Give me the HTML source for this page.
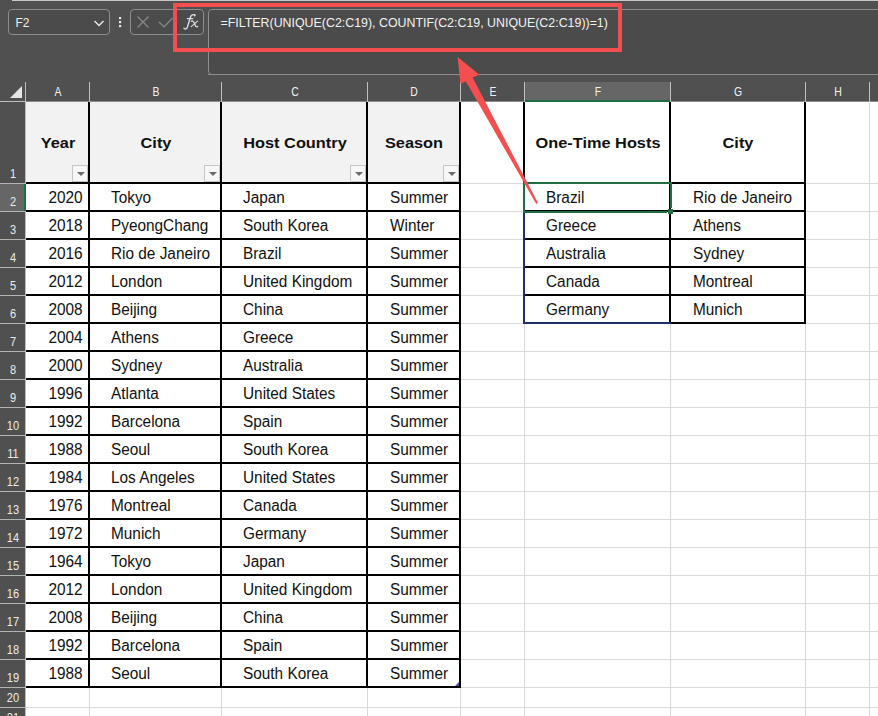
<!DOCTYPE html>
<html><head><meta charset="utf-8"><style>
html,body{margin:0;padding:0;}
body{width:878px;height:716px;overflow:hidden;position:relative;background:#505050;font-family:"Liberation Sans", sans-serif;}
</style></head><body>
<div style="position:absolute;left:26px;top:102px;width:852px;height:614px;background:#ffffff;"></div>
<div style="position:absolute;left:89px;top:102px;width:1px;height:614px;background:#dadada;"></div>
<div style="position:absolute;left:221px;top:102px;width:1px;height:614px;background:#dadada;"></div>
<div style="position:absolute;left:367px;top:102px;width:1px;height:614px;background:#dadada;"></div>
<div style="position:absolute;left:460px;top:102px;width:1px;height:614px;background:#dadada;"></div>
<div style="position:absolute;left:524px;top:102px;width:1px;height:614px;background:#dadada;"></div>
<div style="position:absolute;left:670px;top:102px;width:1px;height:614px;background:#dadada;"></div>
<div style="position:absolute;left:805px;top:102px;width:1px;height:614px;background:#dadada;"></div>
<div style="position:absolute;left:869px;top:102px;width:1px;height:614px;background:#dadada;"></div>
<div style="position:absolute;left:26px;top:183px;width:852px;height:1px;background:#dadada;"></div>
<div style="position:absolute;left:26px;top:211px;width:852px;height:1px;background:#dadada;"></div>
<div style="position:absolute;left:26px;top:239px;width:852px;height:1px;background:#dadada;"></div>
<div style="position:absolute;left:26px;top:267px;width:852px;height:1px;background:#dadada;"></div>
<div style="position:absolute;left:26px;top:295px;width:852px;height:1px;background:#dadada;"></div>
<div style="position:absolute;left:26px;top:323px;width:852px;height:1px;background:#dadada;"></div>
<div style="position:absolute;left:26px;top:351px;width:852px;height:1px;background:#dadada;"></div>
<div style="position:absolute;left:26px;top:379px;width:852px;height:1px;background:#dadada;"></div>
<div style="position:absolute;left:26px;top:407px;width:852px;height:1px;background:#dadada;"></div>
<div style="position:absolute;left:26px;top:435px;width:852px;height:1px;background:#dadada;"></div>
<div style="position:absolute;left:26px;top:463px;width:852px;height:1px;background:#dadada;"></div>
<div style="position:absolute;left:26px;top:491px;width:852px;height:1px;background:#dadada;"></div>
<div style="position:absolute;left:26px;top:519px;width:852px;height:1px;background:#dadada;"></div>
<div style="position:absolute;left:26px;top:547px;width:852px;height:1px;background:#dadada;"></div>
<div style="position:absolute;left:26px;top:575px;width:852px;height:1px;background:#dadada;"></div>
<div style="position:absolute;left:26px;top:603px;width:852px;height:1px;background:#dadada;"></div>
<div style="position:absolute;left:26px;top:631px;width:852px;height:1px;background:#dadada;"></div>
<div style="position:absolute;left:26px;top:659px;width:852px;height:1px;background:#dadada;"></div>
<div style="position:absolute;left:26px;top:687px;width:852px;height:1px;background:#dadada;"></div>
<div style="position:absolute;left:26px;top:707px;width:852px;height:1px;background:#dadada;"></div>
<div style="position:absolute;left:26px;top:102px;width:62px;height:80px;background:#f2f2f2;"></div>
<div style="position:absolute;left:90px;top:102px;width:130px;height:80px;background:#f2f2f2;"></div>
<div style="position:absolute;left:222px;top:102px;width:144px;height:80px;background:#f2f2f2;"></div>
<div style="position:absolute;left:368px;top:102px;width:91px;height:80px;background:#f2f2f2;"></div>
<div style="position:absolute;left:88px;top:102px;width:2px;height:586px;background:#000000;"></div>
<div style="position:absolute;left:220px;top:102px;width:2px;height:586px;background:#000000;"></div>
<div style="position:absolute;left:366px;top:102px;width:2px;height:586px;background:#000000;"></div>
<div style="position:absolute;left:459px;top:102px;width:2px;height:586px;background:#000000;"></div>
<div style="position:absolute;left:26px;top:182px;width:435px;height:2px;background:#000000;"></div>
<div style="position:absolute;left:26px;top:210px;width:435px;height:2px;background:#000000;"></div>
<div style="position:absolute;left:26px;top:238px;width:435px;height:2px;background:#000000;"></div>
<div style="position:absolute;left:26px;top:266px;width:435px;height:2px;background:#000000;"></div>
<div style="position:absolute;left:26px;top:294px;width:435px;height:2px;background:#000000;"></div>
<div style="position:absolute;left:26px;top:322px;width:435px;height:2px;background:#000000;"></div>
<div style="position:absolute;left:26px;top:350px;width:435px;height:2px;background:#000000;"></div>
<div style="position:absolute;left:26px;top:378px;width:435px;height:2px;background:#000000;"></div>
<div style="position:absolute;left:26px;top:406px;width:435px;height:2px;background:#000000;"></div>
<div style="position:absolute;left:26px;top:434px;width:435px;height:2px;background:#000000;"></div>
<div style="position:absolute;left:26px;top:462px;width:435px;height:2px;background:#000000;"></div>
<div style="position:absolute;left:26px;top:490px;width:435px;height:2px;background:#000000;"></div>
<div style="position:absolute;left:26px;top:518px;width:435px;height:2px;background:#000000;"></div>
<div style="position:absolute;left:26px;top:546px;width:435px;height:2px;background:#000000;"></div>
<div style="position:absolute;left:26px;top:574px;width:435px;height:2px;background:#000000;"></div>
<div style="position:absolute;left:26px;top:602px;width:435px;height:2px;background:#000000;"></div>
<div style="position:absolute;left:26px;top:630px;width:435px;height:2px;background:#000000;"></div>
<div style="position:absolute;left:26px;top:658px;width:435px;height:2px;background:#000000;"></div>
<div style="position:absolute;left:26px;top:686px;width:435px;height:2px;background:#000000;"></div>
<div style="position:absolute;left:523px;top:102px;width:2px;height:222px;background:#000000;"></div>
<div style="position:absolute;left:669px;top:102px;width:2px;height:222px;background:#000000;"></div>
<div style="position:absolute;left:804px;top:102px;width:2px;height:222px;background:#000000;"></div>
<div style="position:absolute;left:523px;top:182px;width:283px;height:2px;background:#000000;"></div>
<div style="position:absolute;left:523px;top:210px;width:283px;height:2px;background:#000000;"></div>
<div style="position:absolute;left:523px;top:238px;width:283px;height:2px;background:#000000;"></div>
<div style="position:absolute;left:523px;top:266px;width:283px;height:2px;background:#000000;"></div>
<div style="position:absolute;left:523px;top:294px;width:283px;height:2px;background:#000000;"></div>
<div style="position:absolute;left:523px;top:322px;width:283px;height:2px;background:#000000;"></div>
<div style="position:absolute;left:523px;top:211px;width:2px;height:113px;background:#1e3068;"></div>
<div style="position:absolute;left:523px;top:322px;width:148px;height:2px;background:#1e3068;"></div>
<div style="position:absolute;left:523px;top:182px;width:149px;height:2px;background:#1f6d42;"></div>
<div style="position:absolute;left:523px;top:211px;width:144px;height:2px;background:#1f6d42;"></div>
<div style="position:absolute;left:523px;top:182px;width:2px;height:31px;background:#1f6d42;"></div>
<div style="position:absolute;left:670px;top:182px;width:2px;height:26px;background:#1f6d42;"></div>
<div style="position:absolute;left:668px;top:209px;width:5px;height:5px;background:#1f6d42;"></div>
<div style="position:absolute;left:72px;top:165px;width:14px;height:15px;border:1px solid #c6c6c6;background:#f7f7f7;"></div>
<div style="position:absolute;left:76.5px;top:172px;width:0;height:0;border-left:4px solid transparent;border-right:4px solid transparent;border-top:4px solid #6b6b6b;"></div>
<div style="position:absolute;left:204px;top:165px;width:14px;height:15px;border:1px solid #c6c6c6;background:#f7f7f7;"></div>
<div style="position:absolute;left:208.5px;top:172px;width:0;height:0;border-left:4px solid transparent;border-right:4px solid transparent;border-top:4px solid #6b6b6b;"></div>
<div style="position:absolute;left:350px;top:165px;width:14px;height:15px;border:1px solid #c6c6c6;background:#f7f7f7;"></div>
<div style="position:absolute;left:354.5px;top:172px;width:0;height:0;border-left:4px solid transparent;border-right:4px solid transparent;border-top:4px solid #6b6b6b;"></div>
<div style="position:absolute;left:443px;top:165px;width:14px;height:15px;border:1px solid #c6c6c6;background:#f7f7f7;"></div>
<div style="position:absolute;left:447.5px;top:172px;width:0;height:0;border-left:4px solid transparent;border-right:4px solid transparent;border-top:4px solid #6b6b6b;"></div>
<div style="position:absolute;left:455px;top:682px;width:0;height:0;border-left:4px solid transparent;border-bottom:4px solid #4a4aa0;"></div>
<div style="position:absolute;left:0px;top:0px;width:878px;height:102px;background:#505050;"></div>
<div style="position:absolute;left:12px;top:0px;width:866px;height:1px;background:#c8c8c8;"></div>
<div style="position:absolute;left:208px;top:74px;width:670px;height:1px;background:#8c8c8c;"></div>
<div style="position:absolute;left:0px;top:102px;width:25px;height:614px;background:#505050;"></div>
<div style="position:absolute;left:0px;top:184px;width:24px;height:27px;background:#666666;"></div>
<div style="position:absolute;left:26px;top:101px;width:852px;height:1px;background:#8c8c8c;"></div>
<div style="position:absolute;left:25px;top:82px;width:1px;height:20px;background:#c0c0c0;"></div>
<div style="position:absolute;left:89px;top:82px;width:1px;height:20px;background:#c0c0c0;"></div>
<div style="position:absolute;left:221px;top:82px;width:1px;height:20px;background:#c0c0c0;"></div>
<div style="position:absolute;left:367px;top:82px;width:1px;height:20px;background:#c0c0c0;"></div>
<div style="position:absolute;left:460px;top:82px;width:1px;height:20px;background:#c0c0c0;"></div>
<div style="position:absolute;left:524px;top:82px;width:1px;height:20px;background:#c0c0c0;"></div>
<div style="position:absolute;left:670px;top:82px;width:1px;height:20px;background:#c0c0c0;"></div>
<div style="position:absolute;left:805px;top:82px;width:1px;height:20px;background:#c0c0c0;"></div>
<div style="position:absolute;left:869px;top:82px;width:1px;height:20px;background:#c0c0c0;"></div>
<div style="position:absolute;left:525px;top:82px;width:145px;height:18px;background:#666666;"></div>
<div style="position:absolute;left:525px;top:100px;width:145px;height:2px;background:#1f6d42;"></div>
<div style="position:absolute;left:0px;top:101px;width:25px;height:1px;background:#c0c0c0;"></div>
<div style="position:absolute;left:25px;top:82px;width:1px;height:634px;background:#bcbcbc;"></div>
<div style="position:absolute;left:0px;top:183px;width:25px;height:1px;background:#b4b4b4;"></div>
<div style="position:absolute;left:0px;top:211px;width:25px;height:1px;background:#b4b4b4;"></div>
<div style="position:absolute;left:0px;top:239px;width:25px;height:1px;background:#b4b4b4;"></div>
<div style="position:absolute;left:0px;top:267px;width:25px;height:1px;background:#b4b4b4;"></div>
<div style="position:absolute;left:0px;top:295px;width:25px;height:1px;background:#b4b4b4;"></div>
<div style="position:absolute;left:0px;top:323px;width:25px;height:1px;background:#b4b4b4;"></div>
<div style="position:absolute;left:0px;top:351px;width:25px;height:1px;background:#b4b4b4;"></div>
<div style="position:absolute;left:0px;top:379px;width:25px;height:1px;background:#b4b4b4;"></div>
<div style="position:absolute;left:0px;top:407px;width:25px;height:1px;background:#b4b4b4;"></div>
<div style="position:absolute;left:0px;top:435px;width:25px;height:1px;background:#b4b4b4;"></div>
<div style="position:absolute;left:0px;top:463px;width:25px;height:1px;background:#b4b4b4;"></div>
<div style="position:absolute;left:0px;top:491px;width:25px;height:1px;background:#b4b4b4;"></div>
<div style="position:absolute;left:0px;top:519px;width:25px;height:1px;background:#b4b4b4;"></div>
<div style="position:absolute;left:0px;top:547px;width:25px;height:1px;background:#b4b4b4;"></div>
<div style="position:absolute;left:0px;top:575px;width:25px;height:1px;background:#b4b4b4;"></div>
<div style="position:absolute;left:0px;top:603px;width:25px;height:1px;background:#b4b4b4;"></div>
<div style="position:absolute;left:0px;top:631px;width:25px;height:1px;background:#b4b4b4;"></div>
<div style="position:absolute;left:0px;top:659px;width:25px;height:1px;background:#b4b4b4;"></div>
<div style="position:absolute;left:0px;top:687px;width:25px;height:1px;background:#b4b4b4;"></div>
<div style="position:absolute;left:0px;top:707px;width:25px;height:1px;background:#b4b4b4;"></div>
<div style="position:absolute;left:24px;top:184px;width:2px;height:27px;background:#1f6d42;"></div>
<div style="position:absolute;left:10px;top:86px;width:0;height:0;border-left:12px solid transparent;border-bottom:12px solid #e6e6e6;"></div>
<div style="position:absolute;left:-92.2px;width:300px;top:81.84px;line-height:20px;font-size:12px;color:#f2f2f2;font-weight:normal;white-space:nowrap;text-align:center;transform:scaleX(0.87);">A</div>
<div style="position:absolute;left:5.800000000000011px;width:300px;top:81.84px;line-height:20px;font-size:12px;color:#f2f2f2;font-weight:normal;white-space:nowrap;text-align:center;transform:scaleX(0.87);">B</div>
<div style="position:absolute;left:144.8px;width:300px;top:81.84px;line-height:20px;font-size:12px;color:#f2f2f2;font-weight:normal;white-space:nowrap;text-align:center;transform:scaleX(0.87);">C</div>
<div style="position:absolute;left:264.3px;width:300px;top:81.84px;line-height:20px;font-size:12px;color:#f2f2f2;font-weight:normal;white-space:nowrap;text-align:center;transform:scaleX(0.87);">D</div>
<div style="position:absolute;left:342.8px;width:300px;top:81.84px;line-height:20px;font-size:12px;color:#f2f2f2;font-weight:normal;white-space:nowrap;text-align:center;transform:scaleX(0.87);">E</div>
<div style="position:absolute;left:447.79999999999995px;width:300px;top:81.84px;line-height:20px;font-size:12px;color:#f2f2f2;font-weight:normal;white-space:nowrap;text-align:center;transform:scaleX(0.87);">F</div>
<div style="position:absolute;left:588.3px;width:300px;top:81.84px;line-height:20px;font-size:12px;color:#f2f2f2;font-weight:normal;white-space:nowrap;text-align:center;transform:scaleX(0.87);">G</div>
<div style="position:absolute;left:687.8px;width:300px;top:81.84px;line-height:20px;font-size:12px;color:#f2f2f2;font-weight:normal;white-space:nowrap;text-align:center;transform:scaleX(0.87);">H</div>
<div style="position:absolute;left:-137.0px;width:300px;top:163.84px;line-height:20px;font-size:12px;color:#ececec;font-weight:normal;white-space:nowrap;text-align:center;transform:scaleX(0.92);">1</div>
<div style="position:absolute;left:-137.0px;width:300px;top:191.84px;line-height:20px;font-size:12px;color:#ececec;font-weight:normal;white-space:nowrap;text-align:center;transform:scaleX(0.92);">2</div>
<div style="position:absolute;left:-137.0px;width:300px;top:219.84px;line-height:20px;font-size:12px;color:#ececec;font-weight:normal;white-space:nowrap;text-align:center;transform:scaleX(0.92);">3</div>
<div style="position:absolute;left:-137.0px;width:300px;top:247.84px;line-height:20px;font-size:12px;color:#ececec;font-weight:normal;white-space:nowrap;text-align:center;transform:scaleX(0.92);">4</div>
<div style="position:absolute;left:-137.0px;width:300px;top:275.84px;line-height:20px;font-size:12px;color:#ececec;font-weight:normal;white-space:nowrap;text-align:center;transform:scaleX(0.92);">5</div>
<div style="position:absolute;left:-137.0px;width:300px;top:303.84px;line-height:20px;font-size:12px;color:#ececec;font-weight:normal;white-space:nowrap;text-align:center;transform:scaleX(0.92);">6</div>
<div style="position:absolute;left:-137.0px;width:300px;top:331.84px;line-height:20px;font-size:12px;color:#ececec;font-weight:normal;white-space:nowrap;text-align:center;transform:scaleX(0.92);">7</div>
<div style="position:absolute;left:-137.0px;width:300px;top:359.84px;line-height:20px;font-size:12px;color:#ececec;font-weight:normal;white-space:nowrap;text-align:center;transform:scaleX(0.92);">8</div>
<div style="position:absolute;left:-137.0px;width:300px;top:387.84px;line-height:20px;font-size:12px;color:#ececec;font-weight:normal;white-space:nowrap;text-align:center;transform:scaleX(0.92);">9</div>
<div style="position:absolute;left:-137.0px;width:300px;top:415.84px;line-height:20px;font-size:12px;color:#ececec;font-weight:normal;white-space:nowrap;text-align:center;transform:scaleX(0.92);">10</div>
<div style="position:absolute;left:-137.0px;width:300px;top:443.84px;line-height:20px;font-size:12px;color:#ececec;font-weight:normal;white-space:nowrap;text-align:center;transform:scaleX(0.92);">11</div>
<div style="position:absolute;left:-137.0px;width:300px;top:471.84px;line-height:20px;font-size:12px;color:#ececec;font-weight:normal;white-space:nowrap;text-align:center;transform:scaleX(0.92);">12</div>
<div style="position:absolute;left:-137.0px;width:300px;top:499.84px;line-height:20px;font-size:12px;color:#ececec;font-weight:normal;white-space:nowrap;text-align:center;transform:scaleX(0.92);">13</div>
<div style="position:absolute;left:-137.0px;width:300px;top:527.84px;line-height:20px;font-size:12px;color:#ececec;font-weight:normal;white-space:nowrap;text-align:center;transform:scaleX(0.92);">14</div>
<div style="position:absolute;left:-137.0px;width:300px;top:555.84px;line-height:20px;font-size:12px;color:#ececec;font-weight:normal;white-space:nowrap;text-align:center;transform:scaleX(0.92);">15</div>
<div style="position:absolute;left:-137.0px;width:300px;top:583.84px;line-height:20px;font-size:12px;color:#ececec;font-weight:normal;white-space:nowrap;text-align:center;transform:scaleX(0.92);">16</div>
<div style="position:absolute;left:-137.0px;width:300px;top:611.84px;line-height:20px;font-size:12px;color:#ececec;font-weight:normal;white-space:nowrap;text-align:center;transform:scaleX(0.92);">17</div>
<div style="position:absolute;left:-137.0px;width:300px;top:639.84px;line-height:20px;font-size:12px;color:#ececec;font-weight:normal;white-space:nowrap;text-align:center;transform:scaleX(0.92);">18</div>
<div style="position:absolute;left:-137.0px;width:300px;top:667.84px;line-height:20px;font-size:12px;color:#ececec;font-weight:normal;white-space:nowrap;text-align:center;transform:scaleX(0.92);">19</div>
<div style="position:absolute;left:-137.0px;width:300px;top:687.84px;line-height:20px;font-size:12px;color:#ececec;font-weight:normal;white-space:nowrap;text-align:center;transform:scaleX(0.92);">20</div>
<div style="position:absolute;left:-137.0px;width:300px;top:707.84px;line-height:20px;font-size:12px;color:#ececec;font-weight:normal;white-space:nowrap;text-align:center;transform:scaleX(0.92);">21</div>
<div style="position:absolute;right:795.2px;top:188.26px;line-height:20px;font-size:16px;color:#111111;font-weight:normal;white-space:nowrap;text-align:right;transform:scaleX(0.96);transform-origin:100% 0;">2020</div>
<div style="position:absolute;left:110.9px;top:188.26px;line-height:20px;font-size:16px;color:#111111;font-weight:normal;white-space:nowrap;transform:scaleX(0.96);transform-origin:0 0;">Tokyo</div>
<div style="position:absolute;left:242.7px;top:188.26px;line-height:20px;font-size:16px;color:#111111;font-weight:normal;white-space:nowrap;transform:scaleX(0.96);transform-origin:0 0;">Japan</div>
<div style="position:absolute;left:389.7px;top:188.26px;line-height:20px;font-size:16px;color:#111111;font-weight:normal;white-space:nowrap;transform:scaleX(0.96);transform-origin:0 0;">Summer</div>
<div style="position:absolute;right:795.2px;top:216.26px;line-height:20px;font-size:16px;color:#111111;font-weight:normal;white-space:nowrap;text-align:right;transform:scaleX(0.96);transform-origin:100% 0;">2018</div>
<div style="position:absolute;left:110.9px;top:216.26px;line-height:20px;font-size:16px;color:#111111;font-weight:normal;white-space:nowrap;transform:scaleX(0.96);transform-origin:0 0;">PyeongChang</div>
<div style="position:absolute;left:242.7px;top:216.26px;line-height:20px;font-size:16px;color:#111111;font-weight:normal;white-space:nowrap;transform:scaleX(0.96);transform-origin:0 0;">South Korea</div>
<div style="position:absolute;left:389.7px;top:216.26px;line-height:20px;font-size:16px;color:#111111;font-weight:normal;white-space:nowrap;transform:scaleX(0.96);transform-origin:0 0;">Winter</div>
<div style="position:absolute;right:795.2px;top:244.26px;line-height:20px;font-size:16px;color:#111111;font-weight:normal;white-space:nowrap;text-align:right;transform:scaleX(0.96);transform-origin:100% 0;">2016</div>
<div style="position:absolute;left:110.9px;top:244.26px;line-height:20px;font-size:16px;color:#111111;font-weight:normal;white-space:nowrap;transform:scaleX(0.96);transform-origin:0 0;">Rio de Janeiro</div>
<div style="position:absolute;left:242.7px;top:244.26px;line-height:20px;font-size:16px;color:#111111;font-weight:normal;white-space:nowrap;transform:scaleX(0.96);transform-origin:0 0;">Brazil</div>
<div style="position:absolute;left:389.7px;top:244.26px;line-height:20px;font-size:16px;color:#111111;font-weight:normal;white-space:nowrap;transform:scaleX(0.96);transform-origin:0 0;">Summer</div>
<div style="position:absolute;right:795.2px;top:272.26px;line-height:20px;font-size:16px;color:#111111;font-weight:normal;white-space:nowrap;text-align:right;transform:scaleX(0.96);transform-origin:100% 0;">2012</div>
<div style="position:absolute;left:110.9px;top:272.26px;line-height:20px;font-size:16px;color:#111111;font-weight:normal;white-space:nowrap;transform:scaleX(0.96);transform-origin:0 0;">London</div>
<div style="position:absolute;left:242.7px;top:272.26px;line-height:20px;font-size:16px;color:#111111;font-weight:normal;white-space:nowrap;transform:scaleX(0.96);transform-origin:0 0;">United Kingdom</div>
<div style="position:absolute;left:389.7px;top:272.26px;line-height:20px;font-size:16px;color:#111111;font-weight:normal;white-space:nowrap;transform:scaleX(0.96);transform-origin:0 0;">Summer</div>
<div style="position:absolute;right:795.2px;top:300.26px;line-height:20px;font-size:16px;color:#111111;font-weight:normal;white-space:nowrap;text-align:right;transform:scaleX(0.96);transform-origin:100% 0;">2008</div>
<div style="position:absolute;left:110.9px;top:300.26px;line-height:20px;font-size:16px;color:#111111;font-weight:normal;white-space:nowrap;transform:scaleX(0.96);transform-origin:0 0;">Beijing</div>
<div style="position:absolute;left:242.7px;top:300.26px;line-height:20px;font-size:16px;color:#111111;font-weight:normal;white-space:nowrap;transform:scaleX(0.96);transform-origin:0 0;">China</div>
<div style="position:absolute;left:389.7px;top:300.26px;line-height:20px;font-size:16px;color:#111111;font-weight:normal;white-space:nowrap;transform:scaleX(0.96);transform-origin:0 0;">Summer</div>
<div style="position:absolute;right:795.2px;top:328.26px;line-height:20px;font-size:16px;color:#111111;font-weight:normal;white-space:nowrap;text-align:right;transform:scaleX(0.96);transform-origin:100% 0;">2004</div>
<div style="position:absolute;left:110.9px;top:328.26px;line-height:20px;font-size:16px;color:#111111;font-weight:normal;white-space:nowrap;transform:scaleX(0.96);transform-origin:0 0;">Athens</div>
<div style="position:absolute;left:242.7px;top:328.26px;line-height:20px;font-size:16px;color:#111111;font-weight:normal;white-space:nowrap;transform:scaleX(0.96);transform-origin:0 0;">Greece</div>
<div style="position:absolute;left:389.7px;top:328.26px;line-height:20px;font-size:16px;color:#111111;font-weight:normal;white-space:nowrap;transform:scaleX(0.96);transform-origin:0 0;">Summer</div>
<div style="position:absolute;right:795.2px;top:356.26px;line-height:20px;font-size:16px;color:#111111;font-weight:normal;white-space:nowrap;text-align:right;transform:scaleX(0.96);transform-origin:100% 0;">2000</div>
<div style="position:absolute;left:110.9px;top:356.26px;line-height:20px;font-size:16px;color:#111111;font-weight:normal;white-space:nowrap;transform:scaleX(0.96);transform-origin:0 0;">Sydney</div>
<div style="position:absolute;left:242.7px;top:356.26px;line-height:20px;font-size:16px;color:#111111;font-weight:normal;white-space:nowrap;transform:scaleX(0.96);transform-origin:0 0;">Australia</div>
<div style="position:absolute;left:389.7px;top:356.26px;line-height:20px;font-size:16px;color:#111111;font-weight:normal;white-space:nowrap;transform:scaleX(0.96);transform-origin:0 0;">Summer</div>
<div style="position:absolute;right:795.2px;top:384.26px;line-height:20px;font-size:16px;color:#111111;font-weight:normal;white-space:nowrap;text-align:right;transform:scaleX(0.96);transform-origin:100% 0;">1996</div>
<div style="position:absolute;left:110.9px;top:384.26px;line-height:20px;font-size:16px;color:#111111;font-weight:normal;white-space:nowrap;transform:scaleX(0.96);transform-origin:0 0;">Atlanta</div>
<div style="position:absolute;left:242.7px;top:384.26px;line-height:20px;font-size:16px;color:#111111;font-weight:normal;white-space:nowrap;transform:scaleX(0.96);transform-origin:0 0;">United States</div>
<div style="position:absolute;left:389.7px;top:384.26px;line-height:20px;font-size:16px;color:#111111;font-weight:normal;white-space:nowrap;transform:scaleX(0.96);transform-origin:0 0;">Summer</div>
<div style="position:absolute;right:795.2px;top:412.26px;line-height:20px;font-size:16px;color:#111111;font-weight:normal;white-space:nowrap;text-align:right;transform:scaleX(0.96);transform-origin:100% 0;">1992</div>
<div style="position:absolute;left:110.9px;top:412.26px;line-height:20px;font-size:16px;color:#111111;font-weight:normal;white-space:nowrap;transform:scaleX(0.96);transform-origin:0 0;">Barcelona</div>
<div style="position:absolute;left:242.7px;top:412.26px;line-height:20px;font-size:16px;color:#111111;font-weight:normal;white-space:nowrap;transform:scaleX(0.96);transform-origin:0 0;">Spain</div>
<div style="position:absolute;left:389.7px;top:412.26px;line-height:20px;font-size:16px;color:#111111;font-weight:normal;white-space:nowrap;transform:scaleX(0.96);transform-origin:0 0;">Summer</div>
<div style="position:absolute;right:795.2px;top:440.26px;line-height:20px;font-size:16px;color:#111111;font-weight:normal;white-space:nowrap;text-align:right;transform:scaleX(0.96);transform-origin:100% 0;">1988</div>
<div style="position:absolute;left:110.9px;top:440.26px;line-height:20px;font-size:16px;color:#111111;font-weight:normal;white-space:nowrap;transform:scaleX(0.96);transform-origin:0 0;">Seoul</div>
<div style="position:absolute;left:242.7px;top:440.26px;line-height:20px;font-size:16px;color:#111111;font-weight:normal;white-space:nowrap;transform:scaleX(0.96);transform-origin:0 0;">South Korea</div>
<div style="position:absolute;left:389.7px;top:440.26px;line-height:20px;font-size:16px;color:#111111;font-weight:normal;white-space:nowrap;transform:scaleX(0.96);transform-origin:0 0;">Summer</div>
<div style="position:absolute;right:795.2px;top:468.26px;line-height:20px;font-size:16px;color:#111111;font-weight:normal;white-space:nowrap;text-align:right;transform:scaleX(0.96);transform-origin:100% 0;">1984</div>
<div style="position:absolute;left:110.9px;top:468.26px;line-height:20px;font-size:16px;color:#111111;font-weight:normal;white-space:nowrap;transform:scaleX(0.96);transform-origin:0 0;">Los Angeles</div>
<div style="position:absolute;left:242.7px;top:468.26px;line-height:20px;font-size:16px;color:#111111;font-weight:normal;white-space:nowrap;transform:scaleX(0.96);transform-origin:0 0;">United States</div>
<div style="position:absolute;left:389.7px;top:468.26px;line-height:20px;font-size:16px;color:#111111;font-weight:normal;white-space:nowrap;transform:scaleX(0.96);transform-origin:0 0;">Summer</div>
<div style="position:absolute;right:795.2px;top:496.26px;line-height:20px;font-size:16px;color:#111111;font-weight:normal;white-space:nowrap;text-align:right;transform:scaleX(0.96);transform-origin:100% 0;">1976</div>
<div style="position:absolute;left:110.9px;top:496.26px;line-height:20px;font-size:16px;color:#111111;font-weight:normal;white-space:nowrap;transform:scaleX(0.96);transform-origin:0 0;">Montreal</div>
<div style="position:absolute;left:242.7px;top:496.26px;line-height:20px;font-size:16px;color:#111111;font-weight:normal;white-space:nowrap;transform:scaleX(0.96);transform-origin:0 0;">Canada</div>
<div style="position:absolute;left:389.7px;top:496.26px;line-height:20px;font-size:16px;color:#111111;font-weight:normal;white-space:nowrap;transform:scaleX(0.96);transform-origin:0 0;">Summer</div>
<div style="position:absolute;right:795.2px;top:524.26px;line-height:20px;font-size:16px;color:#111111;font-weight:normal;white-space:nowrap;text-align:right;transform:scaleX(0.96);transform-origin:100% 0;">1972</div>
<div style="position:absolute;left:110.9px;top:524.26px;line-height:20px;font-size:16px;color:#111111;font-weight:normal;white-space:nowrap;transform:scaleX(0.96);transform-origin:0 0;">Munich</div>
<div style="position:absolute;left:242.7px;top:524.26px;line-height:20px;font-size:16px;color:#111111;font-weight:normal;white-space:nowrap;transform:scaleX(0.96);transform-origin:0 0;">Germany</div>
<div style="position:absolute;left:389.7px;top:524.26px;line-height:20px;font-size:16px;color:#111111;font-weight:normal;white-space:nowrap;transform:scaleX(0.96);transform-origin:0 0;">Summer</div>
<div style="position:absolute;right:795.2px;top:552.26px;line-height:20px;font-size:16px;color:#111111;font-weight:normal;white-space:nowrap;text-align:right;transform:scaleX(0.96);transform-origin:100% 0;">1964</div>
<div style="position:absolute;left:110.9px;top:552.26px;line-height:20px;font-size:16px;color:#111111;font-weight:normal;white-space:nowrap;transform:scaleX(0.96);transform-origin:0 0;">Tokyo</div>
<div style="position:absolute;left:242.7px;top:552.26px;line-height:20px;font-size:16px;color:#111111;font-weight:normal;white-space:nowrap;transform:scaleX(0.96);transform-origin:0 0;">Japan</div>
<div style="position:absolute;left:389.7px;top:552.26px;line-height:20px;font-size:16px;color:#111111;font-weight:normal;white-space:nowrap;transform:scaleX(0.96);transform-origin:0 0;">Summer</div>
<div style="position:absolute;right:795.2px;top:580.26px;line-height:20px;font-size:16px;color:#111111;font-weight:normal;white-space:nowrap;text-align:right;transform:scaleX(0.96);transform-origin:100% 0;">2012</div>
<div style="position:absolute;left:110.9px;top:580.26px;line-height:20px;font-size:16px;color:#111111;font-weight:normal;white-space:nowrap;transform:scaleX(0.96);transform-origin:0 0;">London</div>
<div style="position:absolute;left:242.7px;top:580.26px;line-height:20px;font-size:16px;color:#111111;font-weight:normal;white-space:nowrap;transform:scaleX(0.96);transform-origin:0 0;">United Kingdom</div>
<div style="position:absolute;left:389.7px;top:580.26px;line-height:20px;font-size:16px;color:#111111;font-weight:normal;white-space:nowrap;transform:scaleX(0.96);transform-origin:0 0;">Summer</div>
<div style="position:absolute;right:795.2px;top:608.26px;line-height:20px;font-size:16px;color:#111111;font-weight:normal;white-space:nowrap;text-align:right;transform:scaleX(0.96);transform-origin:100% 0;">2008</div>
<div style="position:absolute;left:110.9px;top:608.26px;line-height:20px;font-size:16px;color:#111111;font-weight:normal;white-space:nowrap;transform:scaleX(0.96);transform-origin:0 0;">Beijing</div>
<div style="position:absolute;left:242.7px;top:608.26px;line-height:20px;font-size:16px;color:#111111;font-weight:normal;white-space:nowrap;transform:scaleX(0.96);transform-origin:0 0;">China</div>
<div style="position:absolute;left:389.7px;top:608.26px;line-height:20px;font-size:16px;color:#111111;font-weight:normal;white-space:nowrap;transform:scaleX(0.96);transform-origin:0 0;">Summer</div>
<div style="position:absolute;right:795.2px;top:636.26px;line-height:20px;font-size:16px;color:#111111;font-weight:normal;white-space:nowrap;text-align:right;transform:scaleX(0.96);transform-origin:100% 0;">1992</div>
<div style="position:absolute;left:110.9px;top:636.26px;line-height:20px;font-size:16px;color:#111111;font-weight:normal;white-space:nowrap;transform:scaleX(0.96);transform-origin:0 0;">Barcelona</div>
<div style="position:absolute;left:242.7px;top:636.26px;line-height:20px;font-size:16px;color:#111111;font-weight:normal;white-space:nowrap;transform:scaleX(0.96);transform-origin:0 0;">Spain</div>
<div style="position:absolute;left:389.7px;top:636.26px;line-height:20px;font-size:16px;color:#111111;font-weight:normal;white-space:nowrap;transform:scaleX(0.96);transform-origin:0 0;">Summer</div>
<div style="position:absolute;right:795.2px;top:664.26px;line-height:20px;font-size:16px;color:#111111;font-weight:normal;white-space:nowrap;text-align:right;transform:scaleX(0.96);transform-origin:100% 0;">1988</div>
<div style="position:absolute;left:110.9px;top:664.26px;line-height:20px;font-size:16px;color:#111111;font-weight:normal;white-space:nowrap;transform:scaleX(0.96);transform-origin:0 0;">Seoul</div>
<div style="position:absolute;left:242.7px;top:664.26px;line-height:20px;font-size:16px;color:#111111;font-weight:normal;white-space:nowrap;transform:scaleX(0.96);transform-origin:0 0;">South Korea</div>
<div style="position:absolute;left:389.7px;top:664.26px;line-height:20px;font-size:16px;color:#111111;font-weight:normal;white-space:nowrap;transform:scaleX(0.96);transform-origin:0 0;">Summer</div>
<div style="position:absolute;left:545.7px;top:188.26px;line-height:20px;font-size:16px;color:#111111;font-weight:normal;white-space:nowrap;transform:scaleX(0.96);transform-origin:0 0;">Brazil</div>
<div style="position:absolute;left:692.7px;top:188.26px;line-height:20px;font-size:16px;color:#111111;font-weight:normal;white-space:nowrap;transform:scaleX(0.96);transform-origin:0 0;">Rio de Janeiro</div>
<div style="position:absolute;left:545.7px;top:216.26px;line-height:20px;font-size:16px;color:#111111;font-weight:normal;white-space:nowrap;transform:scaleX(0.96);transform-origin:0 0;">Greece</div>
<div style="position:absolute;left:692.7px;top:216.26px;line-height:20px;font-size:16px;color:#111111;font-weight:normal;white-space:nowrap;transform:scaleX(0.96);transform-origin:0 0;">Athens</div>
<div style="position:absolute;left:545.7px;top:244.26px;line-height:20px;font-size:16px;color:#111111;font-weight:normal;white-space:nowrap;transform:scaleX(0.96);transform-origin:0 0;">Australia</div>
<div style="position:absolute;left:692.7px;top:244.26px;line-height:20px;font-size:16px;color:#111111;font-weight:normal;white-space:nowrap;transform:scaleX(0.96);transform-origin:0 0;">Sydney</div>
<div style="position:absolute;left:545.7px;top:272.26px;line-height:20px;font-size:16px;color:#111111;font-weight:normal;white-space:nowrap;transform:scaleX(0.96);transform-origin:0 0;">Canada</div>
<div style="position:absolute;left:692.7px;top:272.26px;line-height:20px;font-size:16px;color:#111111;font-weight:normal;white-space:nowrap;transform:scaleX(0.96);transform-origin:0 0;">Montreal</div>
<div style="position:absolute;left:545.7px;top:300.26px;line-height:20px;font-size:16px;color:#111111;font-weight:normal;white-space:nowrap;transform:scaleX(0.96);transform-origin:0 0;">Germany</div>
<div style="position:absolute;left:692.7px;top:300.26px;line-height:20px;font-size:16px;color:#111111;font-weight:normal;white-space:nowrap;transform:scaleX(0.96);transform-origin:0 0;">Munich</div>
<div style="position:absolute;left:-92.4px;width:300px;top:132.70px;line-height:20px;font-size:15.3px;color:#111111;font-weight:bold;white-space:nowrap;text-align:center;transform:scaleX(1.068);">Year</div>
<div style="position:absolute;left:5.599999999999994px;width:300px;top:132.70px;line-height:20px;font-size:15.3px;color:#111111;font-weight:bold;white-space:nowrap;text-align:center;transform:scaleX(1.068);">City</div>
<div style="position:absolute;left:144.60000000000002px;width:300px;top:132.70px;line-height:20px;font-size:15.3px;color:#111111;font-weight:bold;white-space:nowrap;text-align:center;transform:scaleX(1.068);">Host Country</div>
<div style="position:absolute;left:264.1px;width:300px;top:132.70px;line-height:20px;font-size:15.3px;color:#111111;font-weight:bold;white-space:nowrap;text-align:center;transform:scaleX(1.068);">Season</div>
<div style="position:absolute;left:447.6px;width:300px;top:132.70px;line-height:20px;font-size:15.3px;color:#111111;font-weight:bold;white-space:nowrap;text-align:center;transform:scaleX(1.068);">One-Time Hosts</div>
<div style="position:absolute;left:588.1px;width:300px;top:132.70px;line-height:20px;font-size:15.3px;color:#111111;font-weight:bold;white-space:nowrap;text-align:center;transform:scaleX(1.068);">City</div>
<div style="position:absolute;left:8px;top:9px;width:100px;height:24px;border:1px solid #8e8e8e;border-radius:4px;background:#4b4b4b;"></div>
<div style="position:absolute;left:15.5px;top:12.84px;line-height:20px;font-size:12px;color:#f0f0f0;font-weight:normal;white-space:nowrap;">F2</div>
<div style="position:absolute;left:130px;top:9px;width:72px;height:24px;border:1px solid #8e8e8e;border-radius:4px;background:#4b4b4b;"></div>
<svg style="position:absolute;left:0;top:0" width="878" height="102"><polyline points="94.5,21 99,25.5 103.5,21" fill="none" stroke="#e6e6e6" stroke-width="1.5"/><rect x="119" y="17" width="2.2" height="2.2" fill="#e6e6e6"/><rect x="119" y="21" width="2.2" height="2.2" fill="#e6e6e6"/><rect x="119" y="25" width="2.2" height="2.2" fill="#e6e6e6"/><path d="M137.5 16.5 L148.5 27.5 M148.5 16.5 L137.5 27.5" stroke="#8a8a8a" stroke-width="1.2" fill="none"/><polyline points="159,22 164,27 172.5,18" fill="none" stroke="#8a8a8a" stroke-width="1.2"/></svg>
<svg style="position:absolute;left:0;top:0" width="220" height="40"><g fill="none" stroke="#dcdcdc" stroke-linecap="round"><path d="M183.9,28.2 C184.9,29.6 186.6,29.3 187.4,27 L190.4,17.2 C191.1,15.1 192.6,14.3 194.6,14.7" stroke-width="1.4"/><path d="M187.3,18.6 L192.8,18.6" stroke-width="1.1"/><path d="M191.4,21.2 C192.6,20.6 193.4,21.3 194,22.6 L195.3,25.6 C195.8,26.8 196.6,27.2 197.6,26.4" stroke-width="1.3"/><path d="M191.2,26.6 L197.6,21.2" stroke-width="1.1"/></g><circle cx="194.8" cy="15.5" r="0.9" fill="#dcdcdc"/></svg>
<div style="position:absolute;left:208px;top:9px;width:680px;height:64px;border:1px solid #8e8e8e;border-radius:4px;background:#4b4b4b;"></div>
<div style="position:absolute;left:220.5px;top:12.70px;line-height:20px;font-size:12.4px;color:#f2f2f2;font-weight:normal;white-space:nowrap;">=FILTER(UNIQUE(C2:C19), COUNTIF(C2:C19, UNIQUE(C2:C19))=1)</div>
<svg style="position:absolute;left:0;top:0" width="878" height="716"><path d="M457.6,57.1 L479.4,74.7 L472.6,77.6 L537.9,202.8 L536.3,204 L465.8,81.3 L460.5,84 Z" fill="#f54e51"/></svg>
<div style="position:absolute;left:173px;top:3px;width:441px;height:41px;border:4px solid #f54e51;"></div>
</body></html>
